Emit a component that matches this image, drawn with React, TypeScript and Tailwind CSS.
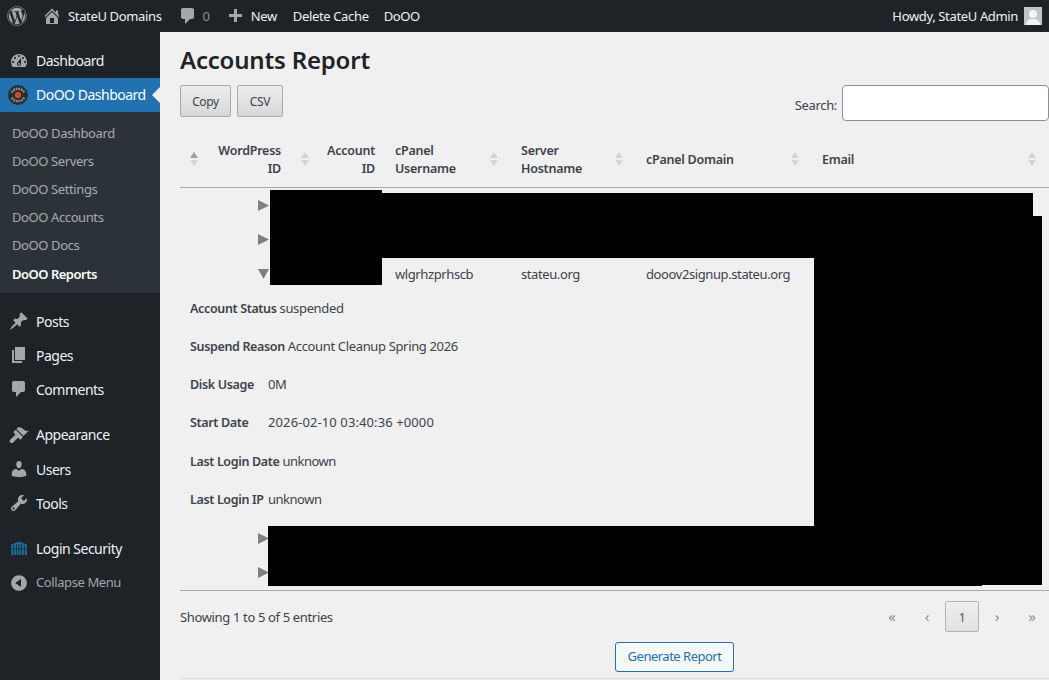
import type { ReactNode } from 'react';
import { FaWordpress } from 'react-icons/fa';

const icons = {
    dashboard:
        'M3.76 16h12.48c1.1-1.37 1.76-3.11 1.76-5 0-4.42-3.58-8-8-8s-8 3.58-8 8c0 1.89.66 3.63 1.76 5zM10 4c.55 0 1 .45 1 1s-.45 1-1 1-1-.45-1-1 .45-1 1-1zM6 6c.55 0 1 .45 1 1s-.45 1-1 1-1-.45-1-1 .45-1 1-1zm8 0c.55 0 1 .45 1 1s-.45 1-1 1-1-.45-1-1 .45-1 1-1zm-5.37 5.55L12 7v6c0 1.1-.9 2-2 2s-2-.9-2-2c0-.57.24-1.08.63-1.45zM4 10c.55 0 1 .45 1 1s-.45 1-1 1-1-.45-1-1 .45-1 1-1zm12 0c.55 0 1 .45 1 1s-.45 1-1 1-1-.45-1-1 .45-1 1-1zm-5 3c0-.55-.45-1-1-1s-1 .45-1 1 .45 1 1 1 1-.45 1-1z',
    home: 'M16 8.5l1.53 1.53-1.06 1.06L10 4.62l-6.47 6.47-1.06-1.06L10 2.5l4 4v-2h2v4zm-6-2.46l6 5.99V18H4v-5.97zM12 17v-5H8v5h4z',
    comment: 'M5 2h9c1.1 0 2 .9 2 2v7c0 1.1-.9 2-2 2h-2l-5 5v-5H5c-1.1 0-2-.9-2-2V4c0-1.1.9-2 2-2z',
    plus: 'M17 7v3h-5v5H9v-5H4V7h5V2h3v5h5z',
    post: 'M10.44 3.02l1.82-1.82 6.36 6.35-1.83 1.82c-1.05-.68-2.48-.57-3.41.36l-.75.75c-.92.93-1.04 2.35-.35 3.41l-1.83 1.82-2.41-2.41-2.8 2.79c-.42.42-3.38 2.71-3.8 2.29s1.86-3.39 2.28-3.81l2.79-2.79L4.1 9.36l1.83-1.82c1.05.69 2.48.57 3.4-.36l.75-.75c.93-.92 1.05-2.35.36-3.41z',
    page: 'M6 15V2h10v13H6zm-1 1h8v2H3V5h2v11z',
    brush: 'M14.48 11.06L7.41 3.99l1.5-1.5c.5-.56 2.3-.47 3.51.32 1.21.8 1.43 1.28 2.91 2.1 1.18.64 2.45 1.26 4.45.85zm-.71.71L6.7 4.7 4.93 6.47c-.39.39-.39 1.02 0 1.41l1.06 1.06c.39.39.39 1.03 0 1.42L1.3 14.5c-.8.8-.8 2.1 0 2.9s2.1.8 2.9 0l4.15-4.2c.39-.39 1.03-.39 1.42 0l1.06 1.06c.39.39 1.02.39 1.41 0z',
    user: 'M10 9.25c-2.27 0-2.73-3.44-2.73-3.44C7 4.02 7.82 2 9.97 2c2.16 0 2.98 2.02 2.71 3.81 0 0-.41 3.44-2.68 3.44zm0 2.57L12.72 10c2.39 0 4.52 2.33 4.52 4.53v2.49s-3.65 1.13-7.24 1.13c-3.65 0-7.24-1.13-7.24-1.13v-2.49c0-2.25 1.94-4.48 4.47-4.48z',
    tools: 'M16.68 9.77c-1.34 1.34-3.3 1.67-4.95.99l-5.41 6.52c-.99.99-2.59.99-3.58 0s-.99-2.59 0-3.57l6.52-5.42c-.68-1.65-.35-3.61.99-4.95 1.28-1.28 3.12-1.62 4.72-1.06l-2.89 2.89 2.82 2.82 2.86-2.87c.53 1.58.18 3.39-1.08 4.65zM3.81 16.21c.4.39 1.04.39 1.43 0 .4-.4.4-1.04 0-1.43-.39-.4-1.03-.4-1.43 0-.39.39-.39 1.03 0 1.43z',
    collapse: 'M10 2.16c4.33 0 7.84 3.51 7.84 7.84s-3.51 7.84-7.84 7.84S2.16 14.33 2.16 10 5.71 2.16 10 2.16zm2 11.72V6.12L6.18 9.97z',
};

function Dashicon({ d, className }: { d: string; className: string }) {
    return (
        <svg viewBox="0 0 20 20" className={className} fill="currentColor">
            <path d={d} />
        </svg>
    );
}

function DoooLogo() {
    return (
        <svg viewBox="0 0 20 20" className="h-5 w-5">
            <circle cx="10" cy="10" r="10" fill="#2a2c2e" />
            <path d="M3.800 7.500a7 7 0 0 1 12.400 0M16.200 12.500a7 7 0 0 1-12.400 0" fill="none" stroke="#8f8f8f" strokeWidth="2.400" strokeDasharray="1.800 0.800" />
            <circle cx="10" cy="10" r="3" fill="#d9532a" />
            <circle cx="10" cy="10" r="0.700" fill="#2a2c2e" />
        </svg>
    );
}

function GateIcon() {
    return (
        <svg viewBox="0 0 20 20" className="h-5 w-5 text-[#1b6a97]" fill="currentColor">
            <path d="M2 6.500l4-1.500 4-1.500 4 1.500 4 1.500V17H2z" />
            <path d="M4.500 7v10M7.500 6v11M10 6v11M12.500 6v11M15.500 7v10M2 11h16" stroke="#1d2327" strokeWidth="0.700" />
        </svg>
    );
}

function MenuItem({ icon, label, className = 'h-[34px]', labelClass = '' }: { icon: ReactNode; label: string; className?: string; labelClass?: string }) {
    return (
        <div className={`flex items-center pl-[8px] text-[14px] tracking-[-0.5px] text-[#f0f0f1] ${className}`}>
            <span className="flex w-[28px] shrink-0 justify-start pl-[1px] text-[#a4a7aa]">{icon}</span>
            <span className={labelClass}>{label}</span>
        </div>
    );
}

function Sidebar() {
    const sub = ['DoOO Dashboard', 'DoOO Servers', 'DoOO Settings', 'DoOO Accounts', 'DoOO Docs'];
    const icon = 'h-5 w-5';
    return (
        <aside className="w-[160px] shrink-0 bg-[#1d2327] pt-[12px]">
            <MenuItem icon={<Dashicon d={icons.dashboard} className={icon} />} label="Dashboard" labelClass="pb-[2px]" />
            <div className="relative flex h-[34px] items-center bg-[#2271b1] pl-[8px] text-[14px] tracking-[-0.5px] text-white">
                <span className="w-[28px] shrink-0">
                    <DoooLogo />
                </span>
                <span className="pb-[2px]">DoOO Dashboard</span>
                <span className="absolute right-0 top-[9px] h-0 w-0 border-y-[8px] border-r-[8px] border-y-transparent border-r-[#f0f0f1]" />
            </div>
            <div className="mb-[11px] bg-[#2c3338] pb-[6px] pl-[12px] pt-[7px] text-[13px] leading-[28px] tracking-[-0.4px] text-[#a9abad]">
                {sub.map((s) => (
                    <div key={s}>{s}</div>
                ))}
                <div className="pt-[2px] font-semibold leading-[26px] tracking-[-0.5px] text-white">DoOO Reports</div>
            </div>
            <MenuItem icon={<Dashicon d={icons.post} className={icon} />} label="Posts" />
            <MenuItem icon={<Dashicon d={icons.page} className={icon} />} label="Pages" />
            <MenuItem icon={<Dashicon d={icons.comment} className={icon} />} label="Comments" className="mb-[11px] h-[34px]" />
            <MenuItem icon={<Dashicon d={icons.brush} className={icon} />} label="Appearance" className="h-[35px]" />
            <MenuItem icon={<Dashicon d={icons.user} className={icon} />} label="Users" />
            <MenuItem icon={<Dashicon d={icons.tools} className={icon} />} label="Tools" className="mb-[11px] h-[34px]" />
            <MenuItem icon={<GateIcon />} label="Login Security" />
            <div className="mt-[2px] flex h-[32px] items-center pl-[8px] text-[13px] tracking-[-0.4px] text-[#a4a7aa]">
                <span className="w-[28px] shrink-0 pl-[1px]">
                    <Dashicon d={icons.collapse} className={icon} />
                </span>
                <span>Collapse Menu</span>
            </div>
        </aside>
    );
}

function AdminBar() {
    return (
        <header className="flex h-[32px] shrink-0 items-center justify-between bg-[#1d2327] text-[13px] text-[#f0f0f1]">
            <div className="flex items-center">
                <span className="ml-[7px] text-[#a4a7aa]">
                    <FaWordpress size={20} />
                </span>
                <span className="ml-[15px] text-[#a4a7aa]">
                    <Dashicon d={icons.home} className="h-5 w-5" />
                </span>
                <span className="ml-[6px] pt-[2px]">StateU Domains</span>
                <span className="ml-[16px] text-[#a4a7aa]">
                    <Dashicon d={icons.comment} className="h-5 w-5" />
                </span>
                <span className="ml-[5px] pt-[2px] text-[#8c8f94]">0</span>
                <span className="ml-[15px] mt-[2px] text-[#a4a7aa]">
                    <Dashicon d={icons.plus} className="h-5 w-5" />
                </span>
                <span className="ml-[6px] pt-[2px]">New</span>
                <span className="ml-[16px] pt-[2px]">Delete Cache</span>
                <span className="ml-[15px] pt-[2px]">DoOO</span>
            </div>
            <div className="mr-[7px] flex items-center gap-[6px]">
                <span className="pt-[2px]">Howdy, StateU Admin</span>
                <span className="flex h-[18px] w-[18px] items-end justify-center overflow-hidden bg-[#c3c4c7]">
                    <svg viewBox="0 0 18 18" className="h-[18px] w-[18px]" fill="#f4f4f4">
                        <circle cx="9" cy="7" r="4" />
                        <path d="M2 18c0-4 3-6 7-6s7 2 7 6z" />
                    </svg>
                </span>
            </div>
        </header>
    );
}

function SortIcon({ side, active = false }: { side: string; active?: boolean }) {
    return (
        <svg viewBox="0 0 8 16" className={`absolute top-1/2 h-[16px] w-[8px] -translate-y-1/2 ${side}`}>
            <path d="M4 1l4 6H0z" fill={active ? '#9a9c9e' : '#d4d5d6'} />
            <path d="M4 15L0 9h8z" fill="#d4d5d6" />
        </svg>
    );
}

function Arrow({ open = false }: { open?: boolean }) {
    return (
        <svg viewBox="0 0 11 11" className="h-[11px] w-[11px]" fill="#808080">
            {open ? <path d="M0 1h11L5.500 11z" /> : <path d="M0 0l11 5.500L0 11z" />}
        </svg>
    );
}

function Heading({ children, numeric = false, active = false }: { children: ReactNode; numeric?: boolean; active?: boolean }) {
    return (
        <th className={`relative pb-[9px] pt-[11px] align-middle text-[12.5px] font-semibold tracking-[-0.25px] ${numeric ? 'pl-[30px] pr-[10px] text-right' : 'pl-[10px] pr-[30px] text-left'}`}>
            <SortIcon side={numeric ? 'left-[10px]' : 'right-[13px]'} active={active} />
            {children}
        </th>
    );
}

function Row({ open = false, cells }: { open?: boolean; cells?: string[] }) {
    return (
        <tr className="h-[34px]">
            <td className="pr-[11px] pt-[2px]">
                <div className="flex justify-end pr-[11px]">
                    <Arrow open={open} />
                </div>
            </td>
            <td />
            {cells ? cells.map((c) => <td key={c} className="px-[10px] pt-[2px] tracking-[-0.4px]">{c}</td>) : <td colSpan={4} />}
            {cells && <td />}
        </tr>
    );
}

const details: [string, string, string][] = [
    ['Account Status', 'suspended', ''],
    ['Suspend Reason', 'Account Cleanup Spring 2026', ''],
    ['Disk Usage', '0M', ''],
    ['Start Date', '2026-02-10 03:40:36 +0000', 'tracking-[0.1px]'],
    ['Last Login Date', 'unknown', 'tracking-[-0.5px]'],
    ['Last Login IP', 'unknown', 'tracking-[-0.5px]'],
];

function AccountsTable() {
    return (
        <table className="w-[869px] table-fixed border-collapse text-[13px] leading-[18px] text-[#3c434a]">
            <colgroup>
                <col className="w-[111px]" />
                <col className="w-[94px]" />
                <col className="w-[126px]" />
                <col className="w-[125px]" />
                <col className="w-[176px]" />
                <col className="w-[237px]" />
            </colgroup>
            <thead>
                <tr className="h-[56px] border-b border-[#a9a9a9]">
                    <Heading numeric active>
                        WordPress ID
                    </Heading>
                    <Heading numeric>Account ID</Heading>
                    <Heading>cPanel Username</Heading>
                    <Heading>Server Hostname</Heading>
                    <Heading>cPanel Domain</Heading>
                    <Heading>Email</Heading>
                </tr>
            </thead>
            <tbody>
                <Row />
                <Row />
                <Row open cells={['wlgrhzprhscb', 'stateu.org', 'dooov2signup.stateu.org']} />
                <tr>
                    <td colSpan={6} className="h-[231px] px-[10px] pb-[13px] pt-[9px] align-top">
                        <ul className="flex flex-col gap-[20px]">
                            {details.map(([k, v, extra]) => (
                                <li key={k} className={`h-[18px] ${k === 'Last Login Date' ? 'mt-px' : ''}`}>
                                    <span className="inline-block min-w-[75px] text-[12.5px] font-semibold tracking-[-0.35px]">{k}</span> <span className={extra}>{v}</span>
                                </li>
                            ))}
                        </ul>
                    </td>
                </tr>
                <Row />
                <Row />
            </tbody>
        </table>
    );
}

function Pagination() {
    const cls = 'flex h-[31px] w-[34px] items-center justify-center text-[15px] text-[#8c8f94]';
    return (
        <div className="flex items-center gap-[1px] text-[13px]">
            <span className={cls}>«</span>
            <span className={cls}>‹</span>
            <span className="flex h-[31px] w-[34px] items-center justify-center rounded-[2px] border border-[#b4b4b4] bg-linear-to-b from-[#eeeeee] to-[#e2e2e2] pt-[3px] text-[#50575e]">1</span>
            <span className={cls}>›</span>
            <span className={cls}>»</span>
        </div>
    );
}

export default function App() {
    const btn = 'h-[32px] rounded-[2px] border border-[#a8a8a8] bg-linear-to-b from-[#ececec] to-[#d8d8d8] pt-px text-[12px] text-[#3c434a]';
    return (
        <div className="flex h-[680px] w-[1049px] flex-col overflow-hidden bg-[#f0f0f1] font-['Noto_Sans',sans-serif] tracking-[-0.35px]">
            <AdminBar />
            <div className="flex min-h-0 flex-1">
                <Sidebar />
                <main className="relative flex-1 pl-[20px]">
                    <h1 className="h-[53px] pt-[12px] text-[24px] font-semibold leading-[32px] tracking-[-0.2px] text-[#1d2327]">Accounts Report</h1>
                    <div className="flex h-[46px] items-start justify-between">
                        <div className="flex gap-[6px]">
                            <button className={`${btn} w-[51px]`}>Copy</button>
                            <button className={`${btn} w-[46px]`}>CSV</button>
                        </div>
                        <label className="flex items-center gap-[5px] text-[13px] text-[#3c434a]">
                            <span className="pt-[6px]">Search:</span>
                            <input className="h-[36px] w-[207px] rounded-[4px] border border-[#8c8f94] bg-white" />
                        </label>
                    </div>
                    <AccountsTable />
                    <div className="mt-px h-px border-t border-[#a9a9a9]" />
                    <div className="mt-[10px] flex items-center justify-between text-[13px] text-[#3c434a]">
                        <span className="pt-[3px]">Showing 1 to 5 of 5 entries</span>
                        <Pagination />
                    </div>
                    <div className="mt-[10px] pl-[435px]">
                        <button className="h-[30px] w-[119px] rounded-[3px] border border-[#2271b1] bg-[#f6f7f7] pt-px text-[13px] tracking-[-0.5px] text-[#2271b1]">Generate Report</button>
                    </div>
                    <hr className="mt-[6px] border-[#dcdcde]" />

                    {/* redaction boxes in the source screenshot */}
                    <div className="absolute left-[110px] top-[158px] h-[95px] w-[112px] bg-black" />
                    <div className="absolute left-[222px] top-[161px] h-[65px] w-[651px] bg-black" />
                    <div className="absolute left-[654px] top-[184px] h-[310px] w-[228px] bg-black" />
                    <div className="absolute left-[108px] top-[494px] h-[59px] w-[774px] bg-black" />
                    <div className="absolute left-[108px] top-[553px] h-px w-[714px] bg-black" />
                </main>
            </div>
        </div>
    );
}
